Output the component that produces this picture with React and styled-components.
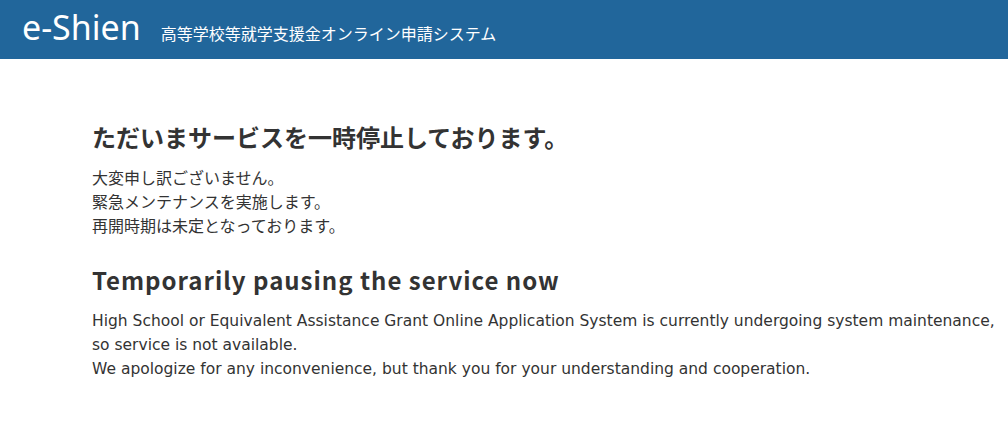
import React from "react";
import styled, { createGlobalStyle } from "styled-components";

const Global = createGlobalStyle`
  html, body { margin: 0; padding: 0; background: #fff; }
  body { font-family: "Noto Sans CJK JP", "Noto Sans", sans-serif; color: #333; }
`;

const Header = styled.header`
  height: 59px;
  background: #21669b;
  display: flex;
  align-items: center;
  padding-left: 22px;
`;

const Logo = styled.div`
  color: #fff;
  font-family: "Noto Sans", "Open Sans", sans-serif;
  font-size: 34px;
  line-height: 1;
  padding-bottom: 6px;
  margin-right: 20px;
`;

const Subtitle = styled.div`
  color: #fff;
  font-size: 16px;
  line-height: 1;
  padding-top: 6px;
`;

const Main = styled.main`
  padding: 61px 0 0 92px;
`;

const Heading = styled.h1`
  margin: 0 0 ${(p) => p.$gap ?? 11}px;
  font-size: 24px;
  font-weight: 700;
  line-height: 34px;
  color: #333;
  letter-spacing: ${(p) => p.$ls || 0}px;
`;

const Para = styled.p`
  margin: 0 0 ${(p) => p.$mb || 0}px;
  font-size: 16px;
  line-height: 24px;
  color: #333;
  white-space: nowrap;
`;

const EnPara = styled(Para)`
  font-family: "DejaVu Sans", "Noto Sans", sans-serif;
  font-size: 15.5px;
`;

export default function App() {
  return (
    <>
      <Global />
      <Header>
        <Logo>e-Shien</Logo>
        <Subtitle>高等学校等就学支援金オンライン申請システム</Subtitle>
      </Header>
      <Main>
        <Heading>ただいまサービスを一時停止しております。</Heading>
        <Para $mb={26}>
          大変申し訳ございません。
          <br />
          緊急メンテナンスを実施します。
          <br />
          再開時期は未定となっております。
        </Para>
        <Heading $ls={1} $gap={12}>Temporarily pausing the service now</Heading>
        <EnPara>
          High School or Equivalent Assistance Grant Online Application System is currently undergoing system maintenance,
          <br />
          so service is not available.
          <br />
          We apologize for any inconvenience, but thank you for your understanding and cooperation.
        </EnPara>
      </Main>
    </>
  );
}
